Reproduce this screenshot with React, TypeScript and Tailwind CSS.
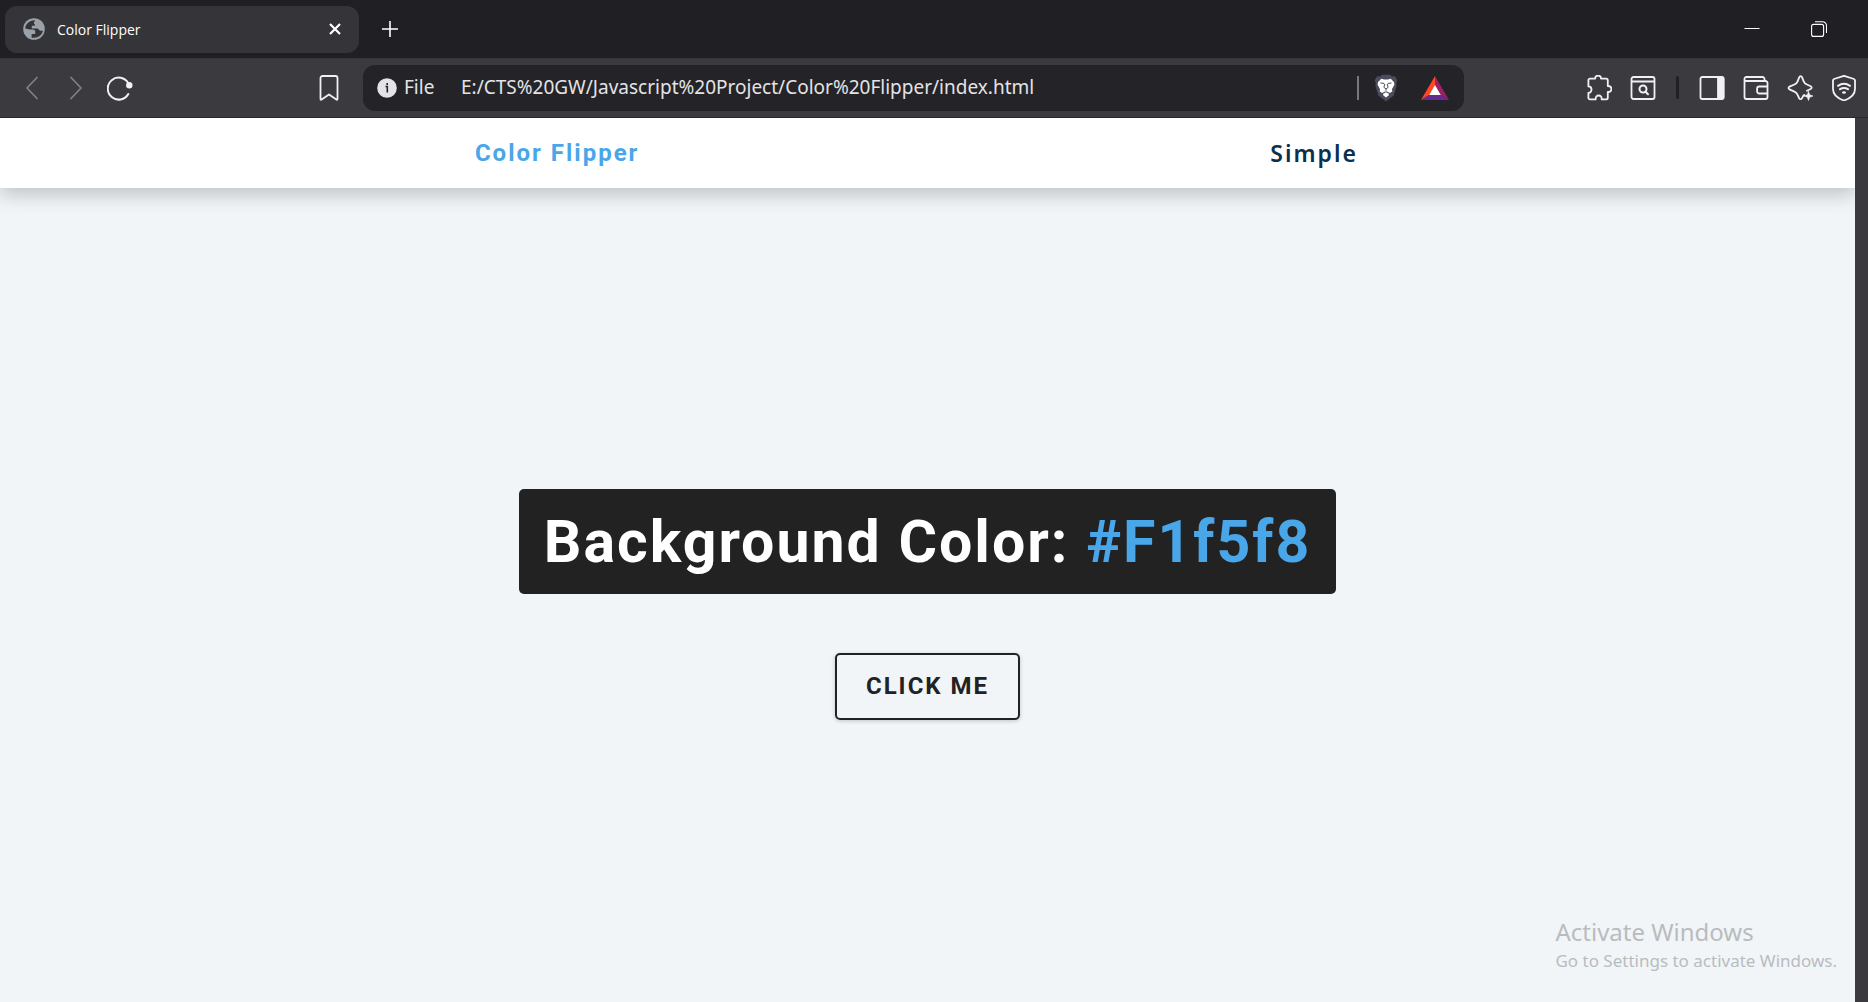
import type { ReactNode } from "react";

function IconButton({ label, children }: { label: string; children: ReactNode }) {
  return (
    <button type="button" aria-label={label} className="flex h-11 w-11 shrink-0 items-center justify-center text-[#f1f1f4]">
      {children}
    </button>
  );
}

function Icon({ children, className = "" }: { children: ReactNode; className?: string }) {
  return (
    <svg viewBox="0 0 26 26" fill="none" stroke="currentColor" strokeWidth="1.8" strokeLinecap="round" strokeLinejoin="round" aria-hidden="true" className={`h-[26px] w-[26px] ${className}`}>
      {children}
    </svg>
  );
}

function TabStrip() {
  return (
    <header className="flex h-[58px] items-center pl-[5px] text-white">
      <div className="flex h-[47px] w-[354px] items-center rounded-xl bg-[#353439] pr-3 pl-[18px]">
        <svg viewBox="0 0 22 22" aria-hidden="true" className="h-[22px] w-[22px]">
          <circle cx="11" cy="11" r="10.8" fill="#9ba1a8" />
          <path d="M2.200 10.500C2.400 6 6.500 2.200 11.500 2.200c.8 0 .2 1.200-.3 1.800-.6.7-.4 1.800.6 2.200v1.500H8.800v2.800h5.400c1.500 0 2 2.300 3.600 2.300h2.100c-.8 3.800-4.200 7-8.900 7-1.500 0-2-.2-2.400-.4v-3.500h3.600v-2.300c0-1.400-.8-2.200-2.600-2.200H6.800Z" fill="#353439" />
        </svg>
        <span className="ml-3 flex-1 pt-[2px] text-sm">Color Flipper</span>
        <button type="button" aria-label="Close tab" className="flex h-6 w-6 items-center justify-center">
          <svg viewBox="0 0 12 12" stroke="currentColor" strokeWidth="2.200" aria-hidden="true" className="h-3 w-3">
            <path d="M1 1l10 10M11 1L1 11" />
          </svg>
        </button>
      </div>
      <button type="button" aria-label="New tab" className="ml-[19px] flex h-6 w-6 items-center justify-center">
        <svg viewBox="0 0 16 16" stroke="currentColor" strokeWidth="1.600" aria-hidden="true" className="h-4 w-4">
          <path d="M8 0v16M0 8h16" />
        </svg>
      </button>
      <div className="ml-auto flex pr-[16px]">
        <button type="button" aria-label="Minimize" className="flex h-10 w-[67px] items-center justify-center">
          <svg viewBox="0 0 16 16" stroke="currentColor" strokeWidth="1" aria-hidden="true" className="h-4 w-4">
            <path d="M.5 7.500h15" />
          </svg>
        </button>
        <button type="button" aria-label="Restore" className="flex h-10 w-[67px] items-center justify-center">
          <svg viewBox="0 0 16 16" fill="none" stroke="currentColor" strokeWidth="1.100" aria-hidden="true" className="h-4 w-4">
            <rect x=".6" y="3.400" width="12" height="12" rx="2" />
            <path d="M4 .7h7.500a4 4 0 0 1 4 4V12" />
          </svg>
        </button>
      </div>
    </header>
  );
}

function Toolbar() {
  return (
    <div className="flex h-[60px] items-center border-y border-t-[#353439] border-b-[#29282d] bg-[#3b3a3f] pb-px">
      <div className="flex w-[363px] pr-3 pl-[10px]">
        <IconButton label="Back">
          <Icon className="text-[#807f84]"><path d="M18 2.500L8 13l10 10.500" /></Icon>
        </IconButton>
        <IconButton label="Forward">
          <Icon className="text-[#807f84]"><path d="M8 2.500L18 13L8 23.500" /></Icon>
        </IconButton>
        <IconButton label="Reload">
          <Icon>
            <path d="M21.300 8.200A11 11 0 1 0 21.300 19" strokeWidth="2" />
            <circle cx="22.300" cy="10.300" r="3.200" fill="currentColor" stroke="none" />
          </Icon>
        </IconButton>
        <div className="ml-auto">
          <IconButton label="Bookmark">
            <Icon><path d="M4.500 3a2 2 0 0 1 2-2h13a2 2 0 0 1 2 2v21a.7.7 0 0 1-1.100.6L13 19.500l-7.400 5.100a.7.7 0 0 1-1.100-.6Z" /></Icon>
          </IconButton>
        </div>
      </div>
      <div className="flex h-[46px] min-w-0 flex-1 items-center rounded-xl bg-[#242328] pl-[14px] font-['Noto_Sans',sans-serif] text-[19px] text-[#e3e3e6]">
        <svg viewBox="0 0 20 20" aria-hidden="true" className="h-5 w-5 shrink-0">
          <circle cx="10" cy="10" r="9.800" fill="#e3e3e8" />
          <path d="M8.500 8.500h1.800v6M10.200 5v2" stroke="#242328" strokeWidth="1.600" fill="none" />
        </svg>
        <span className="ml-[7px] w-[57px] shrink-0">File</span>
        <input type="text" aria-label="Address" defaultValue="E:/CTS%20GW/Javascript%20Project/Color%20Flipper/index.html" className="min-w-0 flex-1 bg-transparent outline-none" />
        <span className="h-6 w-[2px] bg-[#77767b]" />
        <button type="button" aria-label="Shields" className="ml-[14px] flex h-8 w-[26px] items-center justify-center">
          <svg viewBox="0 0 24 28" aria-hidden="true" className="h-7 w-6">
            <path d="M8 .8h8l2 1.700 3-.3 2.200 4-1 3.200.5 2-3 10.100-7.700 6-7.700-6-3-10.100.5-2-1-3.200L3 2.200l3 .3Z" fill="#4a4b5d" />
            <path d="M7.200 4.800l3 .7h3.600l3-.7 3.300 3.500.3 2.500-2.500 4.500.5 2-2.400 1.600-3-1.400h-2l-3 1.400-2.400-1.600.5-2-2.500-4.500.3-2.500Z" fill="#fff" />
            <path d="M9 19.800l3-1.600 3 1.600-.5 1.600L12 23.500l-2.500-2.100Z" fill="#fff" />
            <path d="M6.500 9l3.700.4M17.500 9l-3.700.4M10.800 10l-.9 3.300L12 15l2.100-1.700-.9-3.300M12 15v1.800" fill="none" stroke="#4a4b5d" strokeWidth="1" />
          </svg>
        </button>
        <button type="button" aria-label="Rewards" className="mr-[15px] ml-[22px] flex h-8 w-7 items-center justify-center">
          <svg viewBox="0 0 28 24" aria-hidden="true" className="h-6 w-7">
            <path d="M14 0L0 24l9-5.500 5-9Z" fill="#ff4724" />
            <path d="M14 0l14 24-9-5.500-5-9Z" fill="#9e1f63" />
            <path d="M0 24h28l-9-5.500H9Z" fill="#662d91" />
            <path d="M14 9l5.800 10H8.200Z" fill="#fff" />
          </svg>
        </button>
      </div>
      <div className="flex w-[404px] items-center justify-end pr-[2px]">
        <IconButton label="Extensions">
          <Icon><path d="M4 3.600h5.200c-.2-1.800 1.200-2.900 2.900-2.900s3.100 1.100 2.900 2.900h5.200a1.600 1.600 0 0 1 1.600 1.600V11c2.200-.1 3.600 1.200 3.600 3s-1.400 3.200-3.600 3v5.800a1.600 1.600 0 0 1-1.600 1.600h-4.500c.2-2.400-1.100-3.900-3-3.900s-3.300 1.500-3 3.900H4a1.600 1.600 0 0 1-1.600-1.600v-5c2 .1 3.100-1.400 3.100-3.200s-1.100-3.200-3.100-3.200V5.200A1.600 1.600 0 0 1 4 3.600Z" /></Icon>
        </IconButton>
        <IconButton label="Search tabs">
          <Icon>
            <rect x="1.500" y="2" width="23" height="22" rx="2" />
            <path d="M2 6.500h22" />
            <circle cx="13" cy="14" r="3.500" strokeWidth="2" />
            <path d="M15.600 16.800l2.400 2.400" strokeWidth="2" />
          </Icon>
        </IconButton>
        <span className="mr-[11px] ml-[11px] h-[23px] w-[3px] rounded-full bg-[#201f24]" />
        <IconButton label="Sidebar">
          <Icon>
            <rect x="1.500" y="2" width="23" height="22" rx="1.800" />
            <path d="M19 2.500h4.500a1 1 0 0 1 1 1v19a1 1 0 0 1-1 1H19Z" fill="currentColor" />
          </Icon>
        </IconButton>
        <IconButton label="Wallet">
          <Icon>
            <path d="M21.500 6V4a2 2 0 0 0-2-2H3.300a1.800 1.800 0 0 0-1.800 1.800V22a2 2 0 0 0 2 2h19a2 2 0 0 0 2-2V8a2 2 0 0 0-2-2H2M24.500 11.500h-8.200a2.200 2.200 0 0 0-2.200 2.200v2.600a2.200 2.200 0 0 0 2.200 2.200h8.200" />
          </Icon>
        </IconButton>
        <IconButton label="Leo AI">
          <Icon>
            <path d="M17.500 20l-1 .3-1.600 3c-.6 1.200-2.200 1.200-2.700 0l-1.600-3.500a6 6 0 0 0-3.200-3.200l-4.900-2.200c-1.300-.6-1.300-2.200 0-2.800l4.900-2.100a6 6 0 0 0 3.200-3.200l1.700-4.200c.5-1.300 2.200-1.300 2.700 0l1.700 4.200a6 6 0 0 0 3.200 3.200l3.800 1.700c1.300.6 1.300 2.200 0 2.800l-3.800 1.700" />
            <path d="M21.500 16.500l1.200 3.300 3.300 1.200-3.300 1.200-1.200 3.300-1.200-3.300-3.300-1.200 3.300-1.200Z" fill="currentColor" strokeWidth=".6" />
          </Icon>
        </IconButton>
        <IconButton label="VPN">
          <Icon>
            <path d="M13 .8L23 4q1 .4 1 1.500V14c0 5.500-4.500 9.300-11 11.500C6.500 23.300 2 19.500 2 14V5.500Q2 4.400 3 4Z" />
            <path d="M7 10.800q6-4 12 0M9 14.200q4-2.500 8 0" strokeWidth="2" />
            <ellipse cx="13" cy="17.500" rx="2" ry="1.300" fill="currentColor" stroke="none" />
          </Icon>
        </IconButton>
      </div>
    </div>
  );
}

export default function App() {
  return (
    <div className="flex min-h-screen flex-col bg-[#201f24] font-['Open_Sans',sans-serif]">
      <TabStrip />
      <Toolbar />
      <div className="flex flex-1 bg-[#3b3a3f] pr-[13px]">
        <div className="relative flex flex-1 flex-col overflow-hidden bg-[#f1f5f8]">
          <nav className="flex h-[70px] items-center justify-between bg-white pr-[26.8%] pb-px pl-[25.6%] shadow-[0_6px_19px_rgba(0,0,0,0.22)]">
            <h4 className="font-['Roboto',sans-serif] text-2xl font-bold tracking-[2px] text-[#49a6e9]">Color Flipper</h4>
            <a href="#simple" className="pt-[2px] font-['Noto_Sans',sans-serif] text-[23px] font-semibold tracking-[2px] text-[#0a2f51]">Simple</a>
          </nav>
          <main className="flex flex-1 flex-col items-center justify-center gap-[59px] pt-[18px] font-['Roboto',sans-serif] font-bold text-[#222]">
            <h2 className="rounded-[5px] bg-[#222] px-[25px] py-5 text-[59px] leading-[65px] tracking-[2px] text-white">
              Background Color: <span className="text-[#49a6e9]">#F1f5f8</span>
            </h2>
            <button type="button" className="rounded-[5px] border-2 border-[#222] px-[29px] py-[15px] text-2xl leading-[33px] tracking-[2px] shadow-[0_1px_4px_rgba(0,0,0,0.2)]">
              CLICK ME
            </button>
          </main>
          <aside className="absolute right-[18px] bottom-7 font-['Noto_Sans',sans-serif] text-[#b9bcbe]">
            <p className="text-2xl leading-8">Activate Windows</p>
            <p className="text-[17px] leading-[26px]">Go to Settings to activate Windows.</p>
          </aside>
        </div>
      </div>
    </div>
  );
}
